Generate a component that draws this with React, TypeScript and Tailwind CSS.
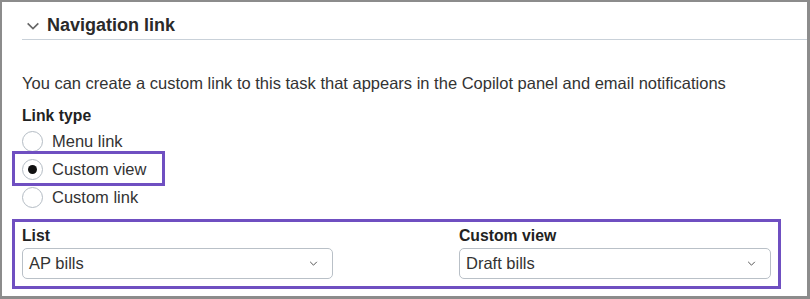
import { useState } from 'react';

const font = { fontFamily: '"Liberation Sans", Arial, sans-serif' };

function Chevron({ className }: { className?: string }) {
  return (
    <svg viewBox="0 0 10 6" className={className} fill="none" stroke="currentColor" strokeWidth="1.2" aria-hidden>
      <path d="M1 1l4 4 4-4" />
    </svg>
  );
}

function Radio({ label, checked, onSelect }: { label: string; checked: boolean; onSelect: () => void }) {
  return (
    <button type="button" onClick={onSelect} className="flex h-full items-center gap-[9px] text-[16.5px] text-[#333]">
      <span className="flex h-[21px] w-[21px] items-center justify-center rounded-full border border-[#b4bcc4] bg-white">
        {checked && <span className="h-[9px] w-[9px] rounded-full bg-[#111]" />}
      </span>
      {label}
    </button>
  );
}

function Select({ label, value }: { label: string; value: string }) {
  return (
    <div className="flex flex-col">
      <span className="h-[20px] text-[15.75px] leading-[20px] font-semibold text-[#222]">{label}</span>
      <div className="mt-[2px] flex h-[31px] items-center justify-between rounded-[5px] border border-[#b9c0c7] bg-white pl-[6px] pr-[14px] text-[16.5px] text-[#333]">
        <span>{value}</span>
        <Chevron className="h-[5px] w-[9px] text-[#555]" />
      </div>
    </div>
  );
}

export default function App() {
  const [type, setType] = useState('view');
  const options = [
    { id: 'menu', label: 'Menu link', h: 'h-[28px]' },
    { id: 'view', label: 'Custom view', h: 'h-[28px]' },
    { id: 'link', label: 'Custom link', h: 'h-[29px]' },
  ];

  return (
    <div style={font} className="h-[299px] w-[810px] overflow-hidden border-2 border-r-[3px] border-b-[3px] border-[#8c8c8c] bg-white">
      <div className="pl-[20px]">
        <div className="flex h-[38px] items-center gap-[7px] border-b border-[#c9d1d9] pl-[4px] pt-[10px]">
          <Chevron className="h-[8px] w-[14px] text-[#666]" />
          <h2 className="text-[18px] font-semibold text-[#2a2a2a]">Navigation link</h2>
        </div>

        <p className="mt-[33px] text-[16.5px] leading-[20px] text-[#333]">
          You can create a custom link to this task that appears in the Copilot panel and email notifications
        </p>

        <p className="mt-[13px] text-[15.75px] leading-[20px] font-semibold text-[#222]">Link type</p>

        <div className="mt-[1px] flex flex-col">
          {options.map((o) => (
            <div key={o.id} className={`relative ${o.h}`}>
              <Radio label={o.label} checked={type === o.id} onSelect={() => setType(o.id)} />
              {o.id === 'view' && (
                <span className="pointer-events-none absolute left-[-10px] top-[-4px] h-[35px] w-[153px] border-[3px] border-[#6f4fc1]" />
              )}
            </div>
          ))}
        </div>

        <div className="-ml-[10px] mt-[7px] flex w-[769px] justify-between border-[3px] border-[#6f4fc1] px-[7px] pt-[4px] pb-[7px]">
          <div className="w-[311px]">
            <Select label="List" value="AP bills" />
          </div>
          <div className="w-[312px]">
            <Select label="Custom view" value="Draft bills" />
          </div>
        </div>
      </div>
    </div>
  );
}
